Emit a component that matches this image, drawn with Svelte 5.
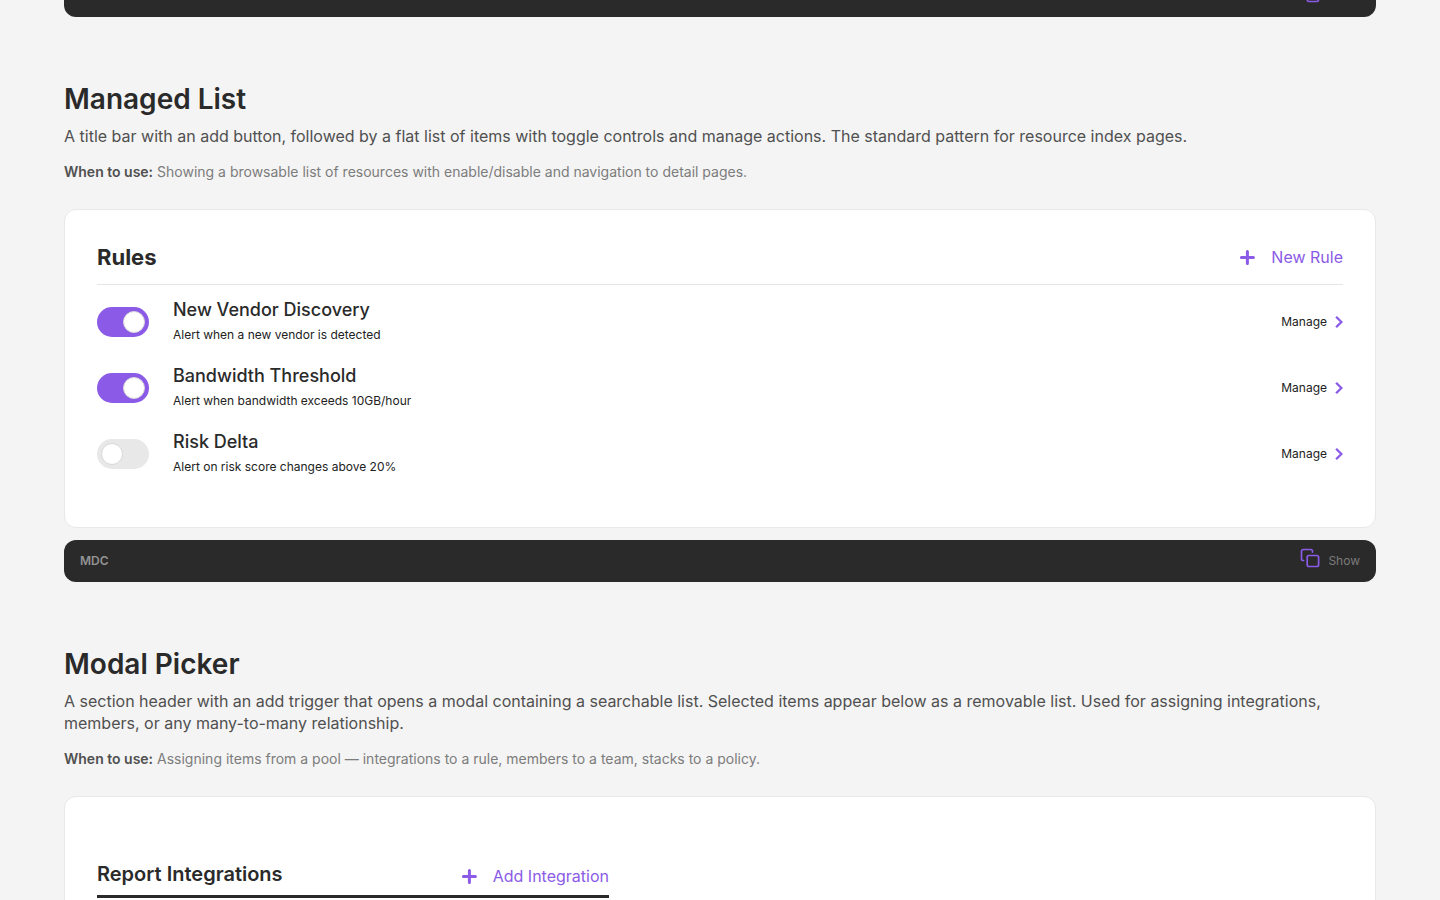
<script>
  let rules = $state([
    { name: 'New Vendor Discovery', note: 'Alert when a new vendor is detected', on: true },
    { name: 'Bandwidth Threshold', note: 'Alert when bandwidth exceeds 10GB/hour', on: true },
    { name: 'Risk Delta', note: 'Alert on risk score changes above 20%', on: false }
  ]);
</script>

{#snippet plus()}
  <svg class="plus" viewBox="0 0 16 16" aria-hidden="true"><path d="M8.4 2.4v12M2.4 8.4h12" /></svg>
{/snippet}

{#snippet copy()}
  <svg class="copy" viewBox="0 0 20 20" aria-hidden="true">
    <rect x="7.2" y="7.5" width="11.4" height="11" rx="1.8" />
    <path d="M3.6 12.5h-.3a1.8 1.8 0 0 1-1.8-1.8V3.3a1.8 1.8 0 0 1 1.8-1.8h7.4a1.8 1.8 0 0 1 1.8 1.8v.8" />
  </svg>
{/snippet}

<main>
  <div class="previous">
    <div class="codebar">
      <button class="icon" aria-label="Copy">{@render copy()}</button>
      <span class="gap"></span>
    </div>
  </div>

  <section>
    <h2>Managed List</h2>
    <p class="lead">A title bar with an add button, followed by a flat list of items with toggle controls and manage actions. The standard pattern for resource index pages.</p>
    <p class="when"><strong>When to use:</strong> Showing a browsable list of resources with enable/disable and navigation to detail pages.</p>
    <div class="card">
      <header class="title">
        <h3>Rules</h3>
        <button class="add">{@render plus()}New Rule</button>
      </header>
      <ul>
        {#each rules as rule, i}
          <li>
            <input type="checkbox" id="rule-{i}" bind:checked={rule.on} />
            <label for="rule-{i}">
              <span class="name">{rule.name}</span>
              <span class="note">{rule.note}</span>
            </label>
            <a href="#rule-{i}">Manage
              <svg class="chevron" viewBox="0 0 8 14" aria-hidden="true"><path d="M1.1 1.7l5.3 5.3-5.3 5.3" /></svg>
            </a>
          </li>
        {/each}
      </ul>
    </div>
    <div class="codebar">
      <span class="lang">MDC</span>
      <button class="icon" aria-label="Copy">{@render copy()}</button>
      <button class="show">Show</button>
    </div>
  </section>

  <section>
    <h2>Modal Picker</h2>
    <p class="lead">A section header with an add trigger that opens a modal containing a searchable list. Selected items appear below as a removable list. Used for assigning integrations, members, or any many-to-many relationship.</p>
    <p class="when"><strong>When to use:</strong> Assigning items from a pool — integrations to a rule, members to a team, stacks to a policy.</p>
    <div class="card picker">
      <header class="picker-title">
        <h4>Report Integrations</h4>
        <button class="add">{@render plus()}Add Integration</button>
      </header>
    </div>
  </section>
</main>

<style>
  :global(html) { overflow: hidden; }
  :global(body) { height: 100vh; overflow: hidden; background: #f4f4f4; }
  main { padding: 0 64px; font-family: Inter, sans-serif; color: #2a2a2a; }
  h2, h3, h4, p, ul { margin: 0; padding: 0; }
  button { padding: 0; border: 0; background: none; font: inherit; cursor: pointer; }
  svg { fill: none; stroke: #8b5ae6; flex: none; }
  .previous { height: 17px; display: flex; flex-direction: column; justify-content: flex-end; overflow: hidden; }
  .previous .codebar { justify-content: flex-end; }
  .gap { width: 32px; }
  section { padding-top: 64px; }
  h2 { font-size: 28px; line-height: 36px; font-weight: 600; }
  .lead { margin-top: 8px; font-size: 16px; line-height: 22px; color: #505050; }
  .when { margin: 16px 0 28px; font-size: 14px; line-height: 18px; color: #7c7c7c; }
  .when strong { font-weight: 600; color: #505050; }
  .card { padding: 32px; border: 1px solid #e8e8e8; border-radius: 12px; background: #fff; }
  .title { display: flex; justify-content: space-between; align-items: center; padding-bottom: 12px; border-bottom: 1px solid #e5e5e5; }
  h3 { font-size: 22px; line-height: 30px; font-weight: 700; }
  .add { display: flex; align-items: center; gap: 16px; font-size: 16px; line-height: 22px; color: #8b5ae6; }
  .plus { width: 16px; height: 16px; stroke-width: 3; stroke-linecap: round; }
  ul { list-style: none; padding: 4px 0 8px; }
  li { display: flex; align-items: center; gap: 24px; height: 66px; }
  input { appearance: none; display: flex; align-items: center; box-sizing: border-box; width: 52px; height: 30px; margin: 0; padding: 4px; border-radius: 15px; background: #e8e8e8; cursor: pointer; }
  input::before { content: ''; width: 20px; height: 20px; border: 1px solid #d8d8d8; border-radius: 50%; background: #fff; }
  input:checked { justify-content: flex-end; background: #8b5ae6; }
  label { display: flex; flex: 1; flex-direction: column; }
  .name { font-size: 18px; line-height: 26px; font-weight: 500; }
  .note { font-size: 12px; line-height: 24px; color: #222; }
  a { display: flex; align-items: center; gap: 8px; font-size: 12px; line-height: 16px; color: #222; text-decoration: none; }
  .chevron { width: 8px; height: 14px; stroke-width: 2.3; }
  .codebar { display: flex; flex: none; align-items: center; box-sizing: border-box; height: 42px; margin-top: 12px; padding: 0 16px; border-radius: 12px; background: #2a2a2a; font-size: 12px; line-height: 16px; color: #949494; }
  .lang { flex: 1; font-weight: 600; }
  .icon { display: flex; margin-right: 8px; padding-bottom: 6px; }
  .copy { width: 20px; height: 20px; stroke-width: 1.7; stroke-linecap: round; }
  .show { color: #7c7c7c; }
  .picker { padding-top: 64px; }
  .picker-title { display: flex; justify-content: space-between; align-items: flex-end; box-sizing: border-box; width: 512px; max-width: 100%; padding-bottom: 8px; border-bottom: 3px solid #2a2a2a; }
  h4 { font-size: 20px; line-height: 26px; font-weight: 600; }
</style>
